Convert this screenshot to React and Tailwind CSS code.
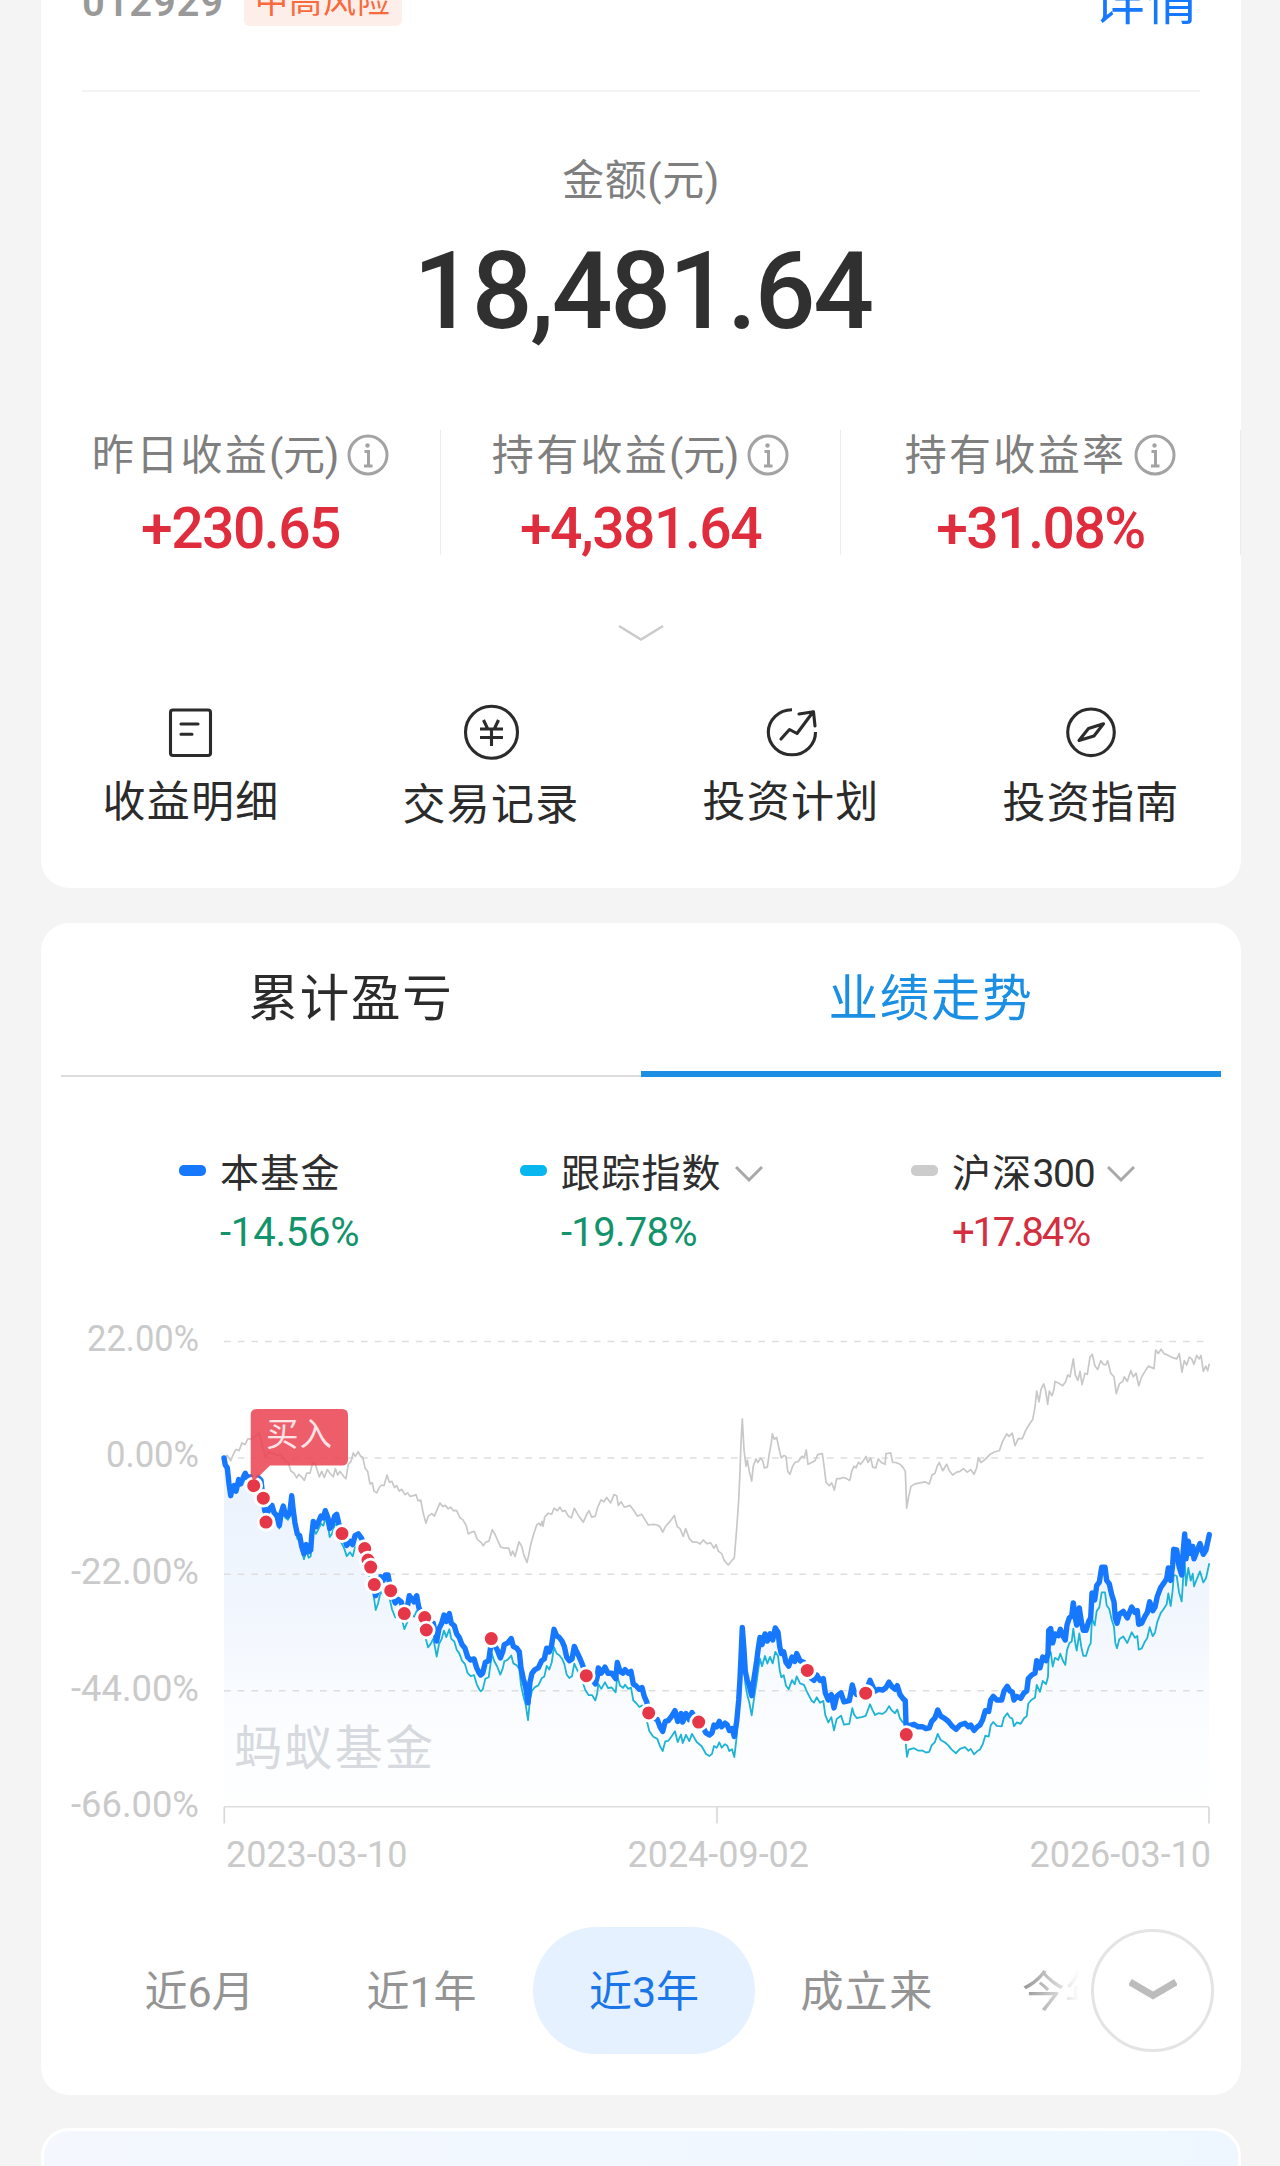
import React from "react";

const GREY_A = [[552,442],[562,435],[572,450],[580,432],[588,418],[597,422],[606,400],[615,405],[624,388],[632,390],[645,382],[657,372],[665,400],[676,440],[685,425],[700,430],[713,435],[722,432],[735,450],[745,455],[752,478],[762,485],[770,498],[776,488],[785,495],[793,505],[800,485],[810,485],[818,455],[826,460],[838,495],[845,480],[853,497],[862,475],[870,485],[880,495],[886,472],[893,490],[900,480],[912,495],[918,500],[925,460],[933,452],[940,428],[946,438],[955,425],[962,438],[968,440],[975,470],[983,480],[990,515],[997,512],[1002,535],[1010,540],[1018,525],[1025,518],[1032,520],[1041,490],[1048,510],[1056,508],[1063,525],[1070,520],[1078,535],[1085,530],[1095,545],[1103,540],[1110,550],[1120,548],[1128,545],[1134,562],[1142,560],[1150,598],[1158,625],[1165,605],[1175,598],[1183,605],[1190,590],[1200,568],[1208,578],[1216,575],[1225,585],[1232,580],[1240,590],[1250,590],[1260,610],[1268,615],[1278,630],[1285,655],[1295,650],[1303,648],[1312,670]];
const GREY_B = [[122,678],[130,688],[137,678],[147,675],[157,643],[166,658],[174,675],[182,692],[195,695],[206,695],[213,715],[218,703],[225,718],[232,695],[237,677],[245,690],[252,715],[261,735],[267,710],[272,685],[281,655],[290,630],[297,625],[302,632],[306,620],[309,634],[314,608],[325,597],[335,600],[342,583],[352,590],[360,580],[367,592],[376,590],[385,605],[394,610],[403,583],[412,598],[420,610],[430,622],[440,600],[447,590],[455,608],[466,605],[473,580],[483,560],[492,565],[500,553],[512,568],[522,545],[530,548],[535,575],[543,565],[553,580],[562,578],[570,575],[582,590],[592,605],[605,600],[615,615],[625,630],[640,628],[652,630],[660,635],[668,650],[676,635],[690,620],[703,603],[712,635],[720,640],[730,662],[737,640],[748,668],[758,678],[770,678],[780,683],[790,672],[800,682],[812,680],[822,695],[828,685],[835,703],[845,710],[853,730],[865,742],[875,730],[883,722],[890,640],[896,560],[900,480],[903,400],[907,333],[912,420],[918,465],[922,448],[928,480],[935,507],[940,465],[948,445],[953,455],[962,443],[968,450],[973,470],[982,468],[988,430],[994,400],[997,375],[1003,390],[1010,385],[1018,420],[1024,442],[1032,435],[1038,438],[1043,480],[1050,488],[1058,465],[1065,455],[1075,452],[1085,438],[1093,440],[1099,420],[1104,460],[1115,455],[1125,450],[1133,433],[1147,430],[1153,470],[1158,510],[1168,520],[1175,512],[1183,532],[1190,500],[1200,500],[1210,497],[1220,500],[1228,505]];
const GREY_C = [[30,503],[35,480],[42,465],[48,470],[55,455],[62,460],[70,450],[78,438],[84,455],[92,442],[98,468],[107,470],[115,445],[124,455],[135,460],[138,430],[152,428],[158,455],[168,455],[180,460],[190,470],[196,480],[198,530],[200,583],[206,550],[213,522],[225,515],[240,512],[255,509],[268,515],[276,490],[285,485],[292,465],[298,455],[308,478],[320,460],[328,478],[338,490],[350,482],[360,480],[370,472],[382,482],[392,475],[402,488],[410,470],[415,442],[423,455],[435,447],[450,432],[465,425],[478,422],[488,395],[500,375],[507,382],[517,373],[525,408],[535,388],[547,388],[557,365],[570,345],[578,335],[585,300],[590,255],[597,285],[603,250],[611,235],[617,255],[623,292],[628,255],[636,268],[642,250],[645,228],[655,232],[668,240],[677,228],[683,210],[690,215],[700,165],[706,210],[714,225],[720,200],[726,237],[735,205],[742,208],[750,160],[757,152],[765,185],[773,195],[782,170],[790,180],[797,182],[803,170],[812,205],[822,215],[829,262],[838,235],[848,228],[853,215],[862,228],[872,198],[880,215],[888,205],[896,240],[905,215],[915,200],[925,185],[942,192],[947,140],[955,150],[963,138],[972,150],[985,155],[1000,162],[1010,165],[1018,150],[1026,202],[1033,170],[1040,182],[1048,160],[1055,165],[1062,180],[1070,155],[1078,165],[1083,155],[1090,200],[1097,185],[1103,198],[1108,178]];

const FUND_A = [[552,442],[556,462],[562,470],[567,515],[572,548],[577,525],[582,520],[588,535],[596,503],[602,515],[610,497],[616,485],[622,498],[632,495],[641,515],[655,497],[663,505],[668,550],[674,590],[680,600],[688,585],[696,575],[702,595],[710,603],[718,632],[724,595],[730,577],[736,600],[744,605],[750,590],[755,548],[760,590],[765,625],[772,655],[779,660],[785,690],[792,710],[799,685],[806,705],[812,700],[815,660],[820,620],[828,635],[836,620],[843,605],[850,610],[856,590],[864,610],[869,640],[876,630],[884,605],[890,600],[896,625],[903,650],[912,665],[920,687],[930,675],[938,685],[945,660],[955,655],[965,668],[974,690],[984,725],[992,745],[998,775],[1003,800],[1007,828],[1014,810],[1022,775],[1030,785],[1036,770],[1044,770],[1050,800],[1056,825],[1066,848],[1074,838],[1084,845],[1093,880],[1102,860],[1108,828],[1114,835],[1122,845],[1130,828],[1136,860],[1145,880],[1156,900],[1164,930],[1172,920],[1180,905],[1190,955],[1197,920],[1205,905],[1212,882],[1219,900],[1228,878],[1234,905],[1243,912],[1250,935],[1258,945],[1266,965],[1275,975],[1283,1000],[1292,1008],[1302,1005],[1310,1030]];
const FUND_B = [[118,1045],[122,1050],[128,1045],[136,1015],[146,1010],[152,970],[156,945],[163,965],[172,980],[181,1002],[188,985],[193,965],[203,960],[214,948],[220,970],[230,975],[238,985],[243,1030],[250,1060],[257,1085],[264,1128],[270,1070],[276,1045],[285,1035],[295,1030],[305,1010],[313,1005],[320,975],[328,985],[335,965],[342,922],[350,940],[358,945],[366,955],[373,970],[380,1000],[388,1010],[396,1005],[403,970],[410,985],[418,1000],[427,1020],[436,1045],[446,1060],[456,1060],[466,1075],[472,1055],[475,1030],[484,1045],[495,1028],[504,1045],[515,1045],[527,1060],[532,1015],[540,1040],[549,1045],[555,1035],[565,1045],[573,1040],[580,1075],[588,1080],[598,1090],[606,1085],[613,1110],[620,1125],[628,1155],[640,1170],[652,1175],[660,1195],[668,1208],[676,1180],[685,1178],[695,1165],[705,1150],[713,1180],[723,1158],[728,1182],[738,1158],[748,1175],[756,1155],[770,1178],[785,1190],[798,1212],[808,1218],[816,1212],[822,1190],[830,1195],[838,1180],[845,1195],[855,1185],[862,1190],[868,1205],[876,1200],[883,1222],[890,1180],[896,1120],[900,1060],[903,1000],[907,917],[912,980],[916,1040],[922,1065],[928,1080],[935,1108],[942,1060],[950,1010],[955,975],[960,945],[966,965],[975,935],[982,955],[990,935],[998,952],[1006,918],[1014,930],[1019,970],[1024,990],[1031,985],[1038,1015],[1046,1025],[1056,1000],[1064,1012],[1070,990],[1080,1010],[1092,1015],[1102,1037],[1115,1060],[1122,1065],[1130,1050],[1140,1065],[1150,1060],[1156,1100],[1165,1120],[1174,1105],[1182,1142],[1190,1110],[1203,1100],[1212,1125],[1228,1122]];
const FUND_C = [[37,1078],[42,1095],[50,1105],[65,1102],[77,1098],[90,1065],[97,1080],[105,1095],[115,1090],[128,1092],[138,1085],[147,1070],[155,1082],[165,1090],[172,1080],[180,1105],[188,1115],[196,1122],[198,1185],[201,1212],[206,1192],[222,1188],[235,1195],[248,1195],[258,1200],[268,1198],[275,1180],[285,1170],[293,1148],[302,1165],[315,1172],[325,1180],[335,1192],[348,1202],[360,1190],[375,1185],[385,1195],[392,1190],[402,1205],[412,1195],[420,1190],[428,1175],[436,1150],[446,1152],[452,1120],[460,1110],[470,1120],[485,1120],[492,1095],[502,1082],[510,1095],[517,1098],[522,1120],[530,1110],[542,1115],[552,1100],[560,1095],[565,1060],[575,1050],[585,1045],[590,1010],[600,1030],[608,1000],[618,1010],[624,990],[626,925],[632,920],[638,960],[645,935],[655,940],[661,922],[668,940],[676,952],[681,910],[688,890],[695,885],[700,848],[706,890],[710,910],[718,862],[724,900],[730,925],[738,925],[746,900],[752,890],[756,820],[764,840],[770,800],[778,790],[785,748],[795,748],[800,785],[808,795],[815,825],[822,845],[826,890],[831,905],[838,880],[850,872],[862,890],[875,860],[885,875],[892,870],[896,908],[905,905],[915,885],[922,875],[929,845],[938,870],[945,860],[952,830],[962,805],[970,795],[980,780],[985,750],[992,785],[998,740],[1001,698],[1010,700],[1017,745],[1025,770],[1030,700],[1034,655],[1038,725],[1045,675],[1052,710],[1058,690],[1062,725],[1070,705],[1080,682],[1090,712],[1098,700],[1108,657]];

// How far the tracked index runs below the fund along the time axis
const GAP = [[552,0],[720,8],[870,24],[1000,40],[1290,45],[1542,50],[1666,46],[1732,38],[1800,50],[1868,55],[1945,60],[2083,58],[2100,20],[2107,8],[2112,30],[2135,55],[2206,67],[2302,62],[2382,63],[2490,67],[2800,67],[2902,75],[3026,65],[3100,72],[3230,70],[3400,72],[3508,80]];

const join = (a, b, c) => [...a, ...b.map(([x, y]) => [x + 1200, y]), ...c.map(([x, y]) => [x + 2400, y])];
const GREY = join(GREY_A, GREY_B, GREY_C);
const FUND = join(FUND_A, FUND_B, FUND_C);
const gapAt = (x) => {
  const i = Math.max(1, GAP.findIndex((g) => g[0] >= x));
  const [x0, y0] = GAP[i - 1];
  const [x1, y1] = GAP[i];
  return y0 + ((y1 - y0) * (x - x0)) / (x1 - x0);
};
const INDEX = FUND.map(([x, y]) => [x, y + gapAt(x)]);
const line = (pts) => pts.map(([x, y]) => `${(40 + x / 3).toFixed(1)},${(y / 2.8).toFixed(1)}`).join(" ");

const BUYS = [[253.7,185.7],[263.3,198.2],[266,222.1],[342,233.6],[364.7,248.6],[368,260],[370.7,267.1],[374.3,284.6],[390.7,290.7],[404.3,313.6],[424.7,317.5],[426.3,330],[491.3,338.6],[586.3,375.7],[648.7,412.9],[698.7,422.1],[807.3,370.4],[865.7,393.2],[906.3,434.6]];
const LEVELS = [
  ["22.00%", 41.4, 50.7, 87, 112],
  ["0.00%", 157.9, 167, 106, 93],
  ["-22.00%", 274.3, 283.7, 71, 128],
  ["-44.00%", 390.7, 400.5, 71, 128],
  ["-66.00%", 506.8, 516.8, 71, 128],
];

function Chart() {
  const fund = line(FUND);
  return (
    <svg width="1200" height="580" viewBox="41 0 1200 580" className="block font-[Roboto,'Noto_Sans_CJK_SC',sans-serif]">
      <defs>
        <linearGradient id="area" gradientUnits="userSpaceOnUse" x1="0" y1="150" x2="0" y2="500">
          <stop offset="0" stopColor="#1a6eea" stopOpacity="0.09" />
          <stop offset="0.45" stopColor="#1a6eea" stopOpacity="0.06" />
          <stop offset="0.75" stopColor="#1677ff" stopOpacity="0.02" />
          <stop offset="1" stopColor="#1677ff" stopOpacity="0.005" />
        </linearGradient>
      </defs>
      <text x="234" y="465" fontSize="48" fill="#d9dbde" textLength="199">蚂蚁基金</text>
      <polygon points={`224,507 ${fund} 1209.3,507`} fill="url(#area)" />
      {LEVELS.map(([label, y, base, x, w], i) => (
        <g key={label}>
          <line x1="224" x2="1209" y1={y} y2={y} stroke="#dedede" strokeWidth="1.5" strokeDasharray={i === 4 ? "none" : "6.7 7"} />
          <text x={x} y={base} fontSize="36.5" fill="#cacaca" textLength={w} lengthAdjust="spacingAndGlyphs">{label}</text>
        </g>
      ))}
      {[224.3, 717, 1209].map((x) => (
        <line key={x} x1={x} x2={x} y1="507" y2="523.5" stroke="#d9d9d9" strokeWidth="1.7" />
      ))}
      {[["2023-03-10", 226], ["2024-09-02", 627.5], ["2026-03-10", 1029.5]].map(([d, x]) => (
        <text key={d} x={x} y="567" fontSize="37" fill="#cacaca" textLength="181.500" lengthAdjust="spacingAndGlyphs">{d}</text>
      ))}
      <polyline points={line(GREY)} fill="none" stroke="#c8c8c8" strokeWidth="1.7" strokeLinejoin="round" />
      <polyline points={line(INDEX)} fill="none" stroke="#1db4d4" strokeWidth="1.8" strokeLinejoin="round" />
      <polyline points={fund} fill="none" stroke="#1677ff" strokeWidth="5.4" strokeLinejoin="round" strokeLinecap="round" />
      {BUYS.map(([x, y]) => (
        <circle key={x} cx={x} cy={y} r="7.9" fill="#e53748" stroke="#fff" strokeWidth="2.8" />
      ))}
      <path d="M257 109H342Q348 109 348 115V159.500Q348 165.500 342 165.500H270L254 181L250.700 176V115Q250.700 109 257 109Z" fill="#ea4252" fillOpacity="0.86" />
      <text x="266" y="145.500" fontSize="32.500" fill="#fde3e5" textLength="66">买入</text>
    </svg>
  );
}

const Info = () => (
  <svg width="42" height="42" viewBox="0 0 42 42" fill="none" stroke="#a3a3a3" strokeWidth="3" className="ml-[8px]">
    <circle cx="21" cy="21" r="19" />
    <circle cx="20.500" cy="11.500" r="2.200" fill="#a3a3a3" stroke="none" />
    <path d="M17.500 17.500h4v14M17 32h8.500" />
  </svg>
);

const Down = () => (
  <svg width="28" height="18" viewBox="0 0 28 18" fill="none" stroke="#a8a8a8" strokeWidth="3" className="ml-[13px]">
    <path d="M1 2 14 15 27 2" />
  </svg>
);

const ICONS = [
  <>
    <rect x="9.500" y="8" width="40" height="45.500" rx="2.500" />
    <path d="M20 22h17M20 32.300h11" strokeLinecap="round" />
  </>,
  <>
    <circle cx="30.500" cy="30.300" r="26" />
    <path d="M22.500 18l4 8.500M37.500 18l-4 8.500M19 27h23M19 35.500h23M30.500 27v17" />
  </>,
  <>
    <path d="M31 7.800A23.600 22.500 0 1 0 54.500 30" />
    <path d="M20 37l8.500-9.500 7.500 4L52 10M38 12l14.500-2.200L54 24" strokeLinejoin="round" strokeLinecap="round" />
  </>,
  <>
    <circle cx="30" cy="30.300" r="23.300" />
    <path d="M42.500 21.800L27.500 26.500 18 38.500l15-4.500Z" strokeLinejoin="round" />
  </>,
];

const STATS = [["昨日收益", "(元)", "+230.65"], ["持有收益", "(元)", "+4,381.64"], ["持有收益率", "", "+31.08%"]];
const ACTIONS = [["收益明细", ""], ["交易记录", "pt-[3px]"], ["投资计划", ""], ["投资指南", "pt-px"]];

function LegendItem({ bar, name, digits, value, color, more }) {
  return (
    <div className="flex">
      <span className={`mt-[20px] mr-[14px] h-[11px] w-[27px] rounded-[5px] ${bar}`} />
      <div>
        <div className="mt-px flex h-[56px] items-center text-[39px] tracking-[1.2px] text-[#2e2e2e]">
          {name}
          {digits && <span className="tracking-[-1.3px]">{digits}</span>}
          {more && <Down />}
        </div>
        <div className={`mt-[3px] h-[56px] text-[40px] leading-[56px] ${color}`}>{value}</div>
      </div>
    </div>
  );
}

export default function App() {
  return (
    <div className="h-[2166px] w-[1280px] overflow-hidden bg-[#f4f4f4] pl-[41px] font-[Roboto,'Noto_Sans_CJK_SC',sans-serif] whitespace-nowrap">
      <section className="h-[888px] w-[1200px] overflow-hidden rounded-b-[28px] bg-white">
        <div className="mx-[41px] flex h-[92px] items-start border-b-2 border-[#f3f3f3]">
          <span className="-mt-[23px] text-[40px] leading-[52px] font-semibold tracking-[0.8px] text-[#999]">012929</span>
          <span className="-mt-[26px] ml-[20px] h-[52px] rounded-[6px] bg-[#feeee9] px-[11px] text-[33px] leading-[55px] tracking-[1px] text-[#f8693c]">中高风险</span>
          <span className="-mt-[28px] mr-[1px] ml-auto text-[52px] leading-[62px] tracking-[1px] text-[#1677ff]">详情</span>
        </div>

        <div className="mt-[59px] text-center text-[42px] leading-[60px] tracking-[0.5px] text-[#7f7f7f]">金额(元)</div>
        <div className="mt-[21px] pl-[3px] text-center text-[107px] leading-[120px] font-medium tracking-[-2.3px] text-[#303030]">18,481.64</div>

        <div className="mt-[78px] grid h-[125px] grid-cols-3">
          {STATS.map(([label, unit, value]) => (
            <div key={label} className="border-r border-[#ececec] text-center">
              <div className="-mt-[1px] flex h-[52px] items-center justify-center text-[42px] tracking-[2.3px] text-[#7f7f7f]">
                {label}
                {unit && <span className="tracking-[-0.3px]">{unit}</span>}
                <Info />
              </div>
              <div className="mt-[22px] text-[57px] leading-[52px] font-medium tracking-[-1.5px] text-[#e02d3d]">{value}</div>
            </div>
          ))}
        </div>

        <svg width="46" height="20" viewBox="0 0 46 20" fill="none" stroke="#cbcbcb" strokeWidth="2.600" className="mx-auto mt-[68px]">
          <path d="M1 3 23 16.500 45 3" />
        </svg>

        <div className="mt-[59px] grid grid-cols-4">
          {ACTIONS.map(([label, shift], i) => (
            <div key={label} className="flex flex-col items-center">
              <svg width="60" height="60" viewBox="0 0 60 60" fill="none" stroke="#2b2b2b" strokeWidth="3.100">
                {ICONS[i]}
              </svg>
              <div className={`mt-[10px] text-[43px] leading-[60px] tracking-[1.3px] text-[#2b2b2b] ${shift}`}>{label}</div>
            </div>
          ))}
        </div>
      </section>

      <section className="mt-[35px] h-[1172px] w-[1200px] overflow-hidden rounded-[28px] bg-white">
        <div className="mx-[20px] grid h-[154px] grid-cols-2 text-center text-[49.500px] leading-[143px] tracking-[1.700px]">
          <div className="border-b-2 border-[#dcdcdc] pt-[5px] text-[#2b2b2b]">累计盈亏</div>
          <div className="border-b-[6px] border-[#1a8fe3] pt-[5px] text-[#1a8fe3]">业绩走势</div>
        </div>

        <div className="mt-[68px] flex h-[115px] pl-[138px]">
          <div className="w-[341px]">
            <LegendItem bar="bg-[#1677ff]" name="本基金" value="-14.56%" color="tracking-[-0.2px] text-[#12936b]" />
          </div>
          <div className="w-[391px]">
            <LegendItem bar="bg-[#08b7ef]" name="跟踪指数" value="-19.78%" color="tracking-[-0.7px] text-[#12936b]" more />
          </div>
          <LegendItem bar="bg-[#cccccc]" name="沪深" digits="300" value="+17.84%" color="tracking-[-2.2px] text-[#d42f40]" more />
        </div>

        <div className="mt-[40px]">
          <Chart />
        </div>

        <div className="mt-[47px] flex h-[127px] items-center pl-[46px] text-[43px] leading-[127px] text-[#949494]">
          <div className="w-[223px] pt-[3px] pl-[2px] text-center">近6月</div>
          <div className="w-[223px] pt-[3px] text-center">近1年</div>
          <div className="h-[127px] w-[222px] rounded-full bg-[#e6f1ff] pt-px text-center leading-[128px] text-[#1a75e8]">近3年</div>
          <div className="w-[221px] pt-[3px] pl-[3px] text-center tracking-[1.4px]">成立来</div>
          <div className="w-[115px] overflow-hidden bg-gradient-to-r from-[#949494] from-40% to-white to-90% bg-clip-text pt-[3px] pl-[46px] text-transparent">今年来</div>
          <div className="flex h-[123px] w-[123px] items-center justify-center rounded-full border-[3px] border-[#e4e4e4]">
            <svg width="48" height="28" viewBox="0 0 48 28" fill="none" stroke="#bcbcbc" strokeWidth="7">
              <path d="M1 5 24 18.500 47 5" />
            </svg>
          </div>
        </div>
      </section>

      <section className="mt-[33px] h-[80px] w-[1200px] rounded-t-[28px] border-[3px] border-white bg-gradient-to-r from-[#f4f8fe] to-[#eef7ff]" />
    </div>
  );
}
